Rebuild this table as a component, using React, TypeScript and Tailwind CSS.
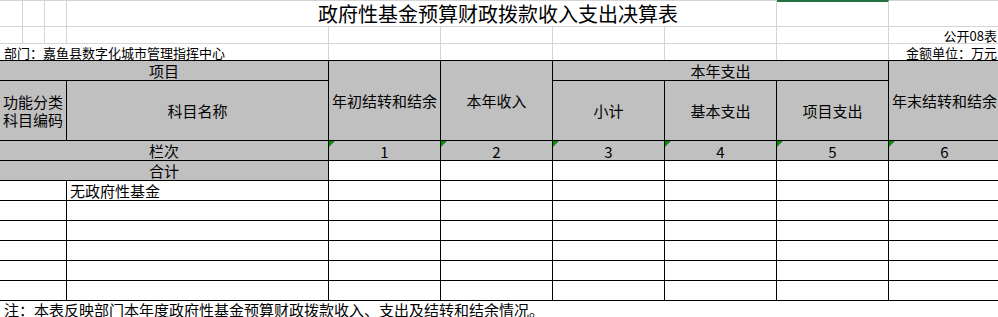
import React from "react"

const font = { fontFamily: '"Noto Sans CJK SC", "Noto Sans", sans-serif' }

function Cell({
  className = "",
  children,
}: {
  className?: string
  children?: React.ReactNode
}) {
  return (
    <div
      className={
        "border-r border-b border-black flex items-center justify-center text-[15px] leading-[18px] text-black " +
        className
      }
    >
      {children}
    </div>
  )
}

function Flag() {
  return (
    <svg className="absolute left-0 top-0" width="6" height="6" viewBox="0 0 6 6">
      <polygon points="0,0 6,0 0,6" fill="#138a13" />
    </svg>
  )
}

const headGray = "bg-[#c0c0c0]"

export default function App() {
  const nums = ["1", "2", "3", "4", "5", "6"]
  const dataRows = [0, 1, 2, 3, 4, 5]

  return (
    <div className="w-[998px] h-[317px] overflow-hidden bg-white" style={font}>
      <div className="w-[1001px]">
        {/* title row */}
        <div className="flex h-[27px] border-b border-[#d4d4d4]">
          <div className="w-[23px] border-t border-r border-[#d4d4d4]" />
          <div className="w-[22px] border-t border-r border-[#d4d4d4]" />
          <div className="w-[22px] border-t border-r border-[#d4d4d4]" />
          <div className="w-[710px] border-t border-r border-[#d4d4d4] flex items-center pl-[251px] text-[20px] leading-[24px] text-black whitespace-nowrap">
            政府性基金预算财政拨款收入支出决算表
          </div>
          <div className="w-[112px] border-t-2 border-t-[#217346] border-r border-r-[#d4d4d4]" />
          <div className="w-[112px] border-t border-[#d4d4d4]" />
        </div>

        {/* 公开08表 */}
        <div className="flex h-[17px] border-b border-[#d4d4d4]">
          <div className="w-[23px] border-r border-[#d4d4d4]" />
          <div className="w-[22px] border-r border-[#d4d4d4]" />
          <div className="w-[22px] border-r border-[#d4d4d4]" />
          <div className="w-[262px] border-r border-[#d4d4d4]" />
          <div className="w-[112px] border-r border-[#d4d4d4]" />
          <div className="w-[112px] border-r border-[#d4d4d4]" />
          <div className="w-[112px] border-r border-[#d4d4d4]" />
          <div className="w-[112px] border-r border-[#d4d4d4]" />
          <div className="w-[112px] border-r border-[#d4d4d4]" />
          <div className="w-[112px] flex items-center justify-end pr-[4px] text-[13px] leading-[15px] whitespace-nowrap">
            公开08表
          </div>
        </div>

        {/* 部门 */}
        <div className="flex h-[17px] border-b border-black">
          <div className="w-[329px] border-r border-[#d4d4d4] flex items-center pl-[4px] text-[13px] leading-[15px] whitespace-nowrap">
            部门：嘉鱼县数字化城市管理指挥中心
          </div>
          <div className="w-[112px] border-r border-[#d4d4d4]" />
          <div className="w-[112px] border-r border-[#d4d4d4]" />
          <div className="w-[112px] border-r border-[#d4d4d4]" />
          <div className="w-[112px] border-r border-[#d4d4d4]" />
          <div className="w-[112px] border-r border-[#d4d4d4]" />
          <div className="w-[112px] flex items-center justify-end pr-[4px] text-[13px] leading-[15px] whitespace-nowrap">
            金额单位：万元
          </div>
        </div>

        {/* table */}
        <div className="grid grid-cols-[67px_262px_112px_112px_112px_112px_112px_112px] grid-rows-[20px_60px_20px_20px_20px_20px_20px_20px_20px_20px]">
          <Cell className={`${headGray} col-span-2`}>项目</Cell>
          <Cell className={`${headGray} row-span-2`}>年初结转和结余</Cell>
          <Cell className={`${headGray} row-span-2`}>本年收入</Cell>
          <Cell className={`${headGray} col-span-3`}>本年支出</Cell>
          <Cell className={`${headGray} row-span-2`}>年末结转和结余</Cell>

          <Cell className={`${headGray} flex-col`}>
            <span className="leading-[18px]">功能分类</span>
            <span className="leading-[18px]">科目编码</span>
          </Cell>
          <Cell className={headGray}>科目名称</Cell>
          <Cell className={headGray}>小计</Cell>
          <Cell className={headGray}>基本支出</Cell>
          <Cell className={headGray}>项目支出</Cell>

          <Cell className={`${headGray} col-span-2`}>栏次</Cell>
          {nums.map((n) => (
            <Cell key={n} className={`${headGray} relative pt-[3px]`}>
              <Flag />
              {n}
            </Cell>
          ))}

          <Cell className={`${headGray} col-span-2`}>合计</Cell>
          {nums.map((n) => (
            <Cell key={"t" + n} />
          ))}

          {dataRows.map((r) =>
            [0, 1, 2, 3, 4, 5, 6, 7].map((c) => (
              <Cell key={r + "-" + c} className={c === 1 ? "justify-start pl-[3px]" : ""}>
                {r === 0 && c === 1 ? "无政府性基金" : null}
              </Cell>
            ))
          )}
        </div>

        {/* note */}
        <div className="h-[16px] flex items-center pl-[4px] text-[15px] leading-[15px] whitespace-nowrap">
          注：本表反映部门本年度政府性基金预算财政拨款收入、支出及结转和结余情况。
        </div>
      </div>
    </div>
  )
}
